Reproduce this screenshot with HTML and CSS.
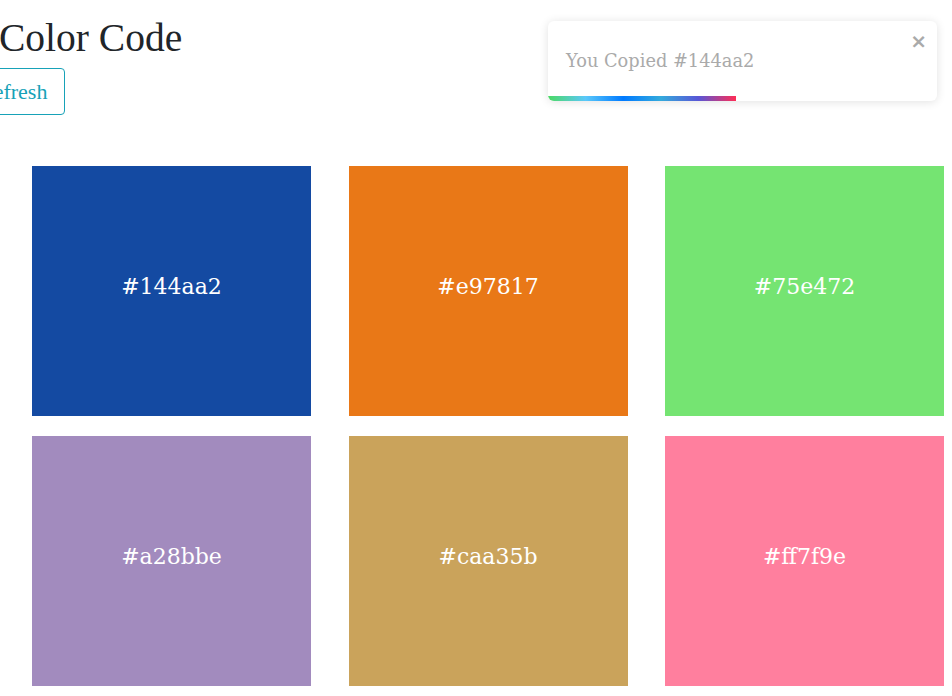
FILE: index.html
```html
<!DOCTYPE html>
<html>
<head>
<meta charset="utf-8">
<link rel="stylesheet" href="styles.css">
</head>
<body>
<header class="header">
  <h1 class="title">Color Code</h1>
  <button class="refresh">Refresh</button>
</header>
<main class="grid">
  <div class="swatch" style="background:#144aa2">#144aa2</div>
  <div class="swatch" style="background:#e97817">#e97817</div>
  <div class="swatch" style="background:#75e472">#75e472</div>
  <div class="swatch" style="background:#a28bbe">#a28bbe</div>
  <div class="swatch" style="background:#caa35b">#caa35b</div>
  <div class="swatch" style="background:#ff7f9e">#ff7f9e</div>
</main>
<div class="toast">
  <span class="toast-text">You Copied #144aa2</span>
  <span class="toast-close">&times;</span>
  <div class="toast-bar"></div>
</div>
</body>
</html>
```
FILE: styles.css
```css
html, body {
  margin: 0;
  padding: 0;
  background: #fff;
  overflow: hidden;
}
body {
  width: 952px;
  height: 696px;
  font-family: "Liberation Serif", "DejaVu Serif", serif;
}
.header {
  display: flex;
  flex-direction: column;
  align-items: flex-start;
  padding-top: 17px;
}
.title {
  margin: 0 0 0 -1px;
  font-weight: normal;
  font-size: 39.5px;
  line-height: 42px;
  color: #212529;
}
.refresh {
  margin-top: 9px;
  margin-left: -38px;
  height: 47px;
  padding: 0 17px 0 16px;
  font-family: "Liberation Serif", serif;
  font-size: 22px;
  color: #17a2b8;
  background: #fff;
  border: 1px solid #17a2b8;
  border-radius: 4px;
}
.grid {
  display: grid;
  grid-template-columns: 279px 279px 279px;
  grid-auto-rows: 250px;
  column-gap: 37.5px;
  row-gap: 20px;
  margin-top: 51px;
  margin-left: 32px;
}
.swatch {
  display: flex;
  align-items: center;
  justify-content: center;
  color: #fff;
  font-family: "DejaVu Serif", serif;
  font-size: 22px;
  padding-bottom: 9px;
  box-sizing: border-box;
}
.toast {
  position: absolute;
  top: 21px;
  left: 548px;
  width: 389px;
  height: 80px;
  background: #fff;
  border-radius: 6px;
  box-shadow: 0 1px 10px rgba(0,0,0,0.12);
  overflow: hidden;
  box-sizing: border-box;
  padding: 29px 18px 0 18px;
}
.toast-text {
  color: #aaa;
  font-family: "DejaVu Serif", serif;
  font-size: 17.8px;
}
.toast-close {
  position: absolute;
  top: 8px;
  right: 10px;
  color: #aaa;
  font-family: "DejaVu Sans", sans-serif;
  font-weight: bold;
  font-size: 20px;
}
.toast-bar {
  position: absolute;
  left: 0;
  bottom: 0;
  width: 188px;
  height: 5px;
  background: linear-gradient(to right, #4cd964, #5ac8fa, #007aff, #34aadc, #5856d6, #ff2d55);
}
```
